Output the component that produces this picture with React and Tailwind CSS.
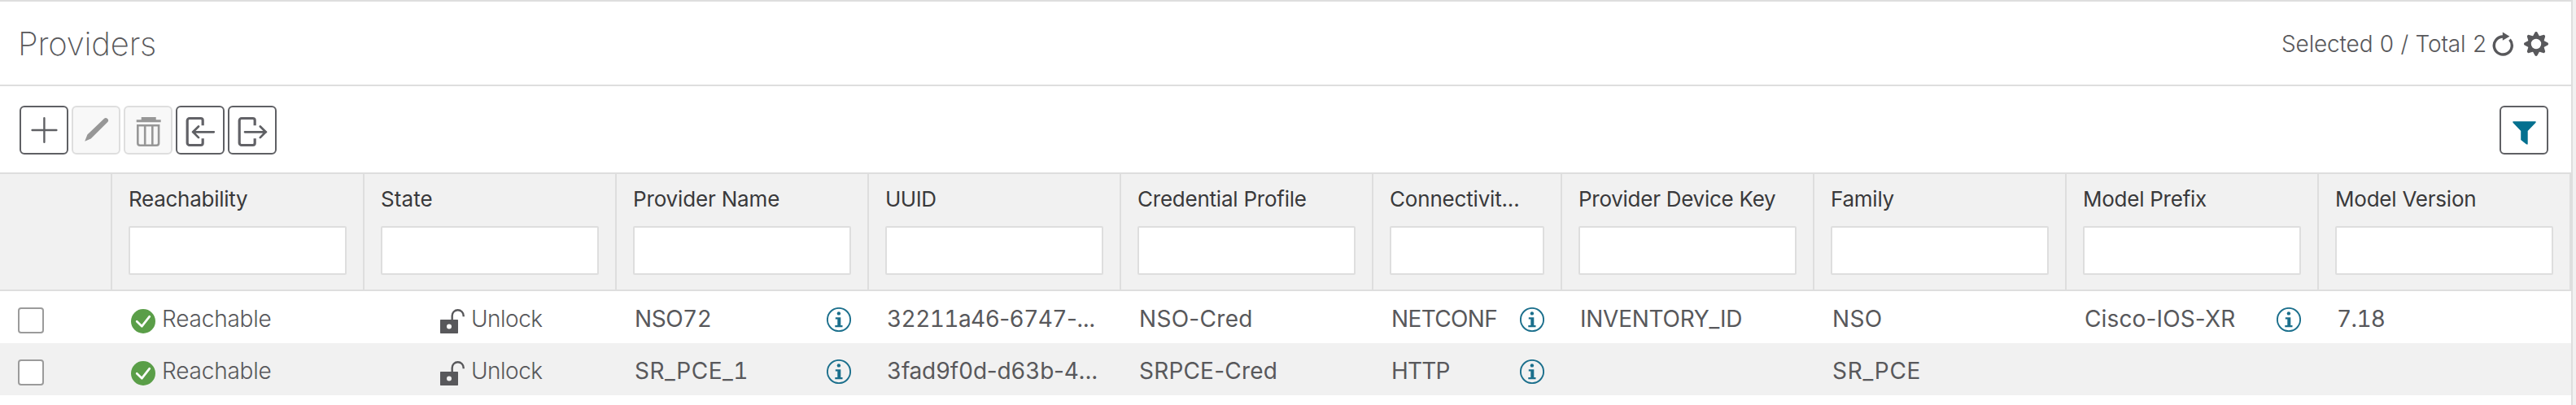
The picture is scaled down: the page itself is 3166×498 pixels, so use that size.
const columns = [
  { title: 'Reachability', w: 'w-[310px]', track: 'tracking-[-0.28px]' },
  { title: 'State', w: 'w-[310px]', track: 'tracking-[0.1px]' },
  { title: 'Provider Name', w: 'w-[310px]', track: 'tracking-[-0.16px]' },
  { title: 'UUID', w: 'w-[310px]', track: 'tracking-[-0.5px]' },
  { title: 'Credential Profile', w: 'w-[310px]', track: 'tracking-[-0.23px]' },
  { title: 'Connectivit...', w: 'w-[232px]', track: 'tracking-[-0.18px]' },
  { title: 'Provider Device Key', w: 'w-[310px]', track: 'tracking-[-0.27px]' },
  { title: 'Family', w: 'w-[310px]', track: 'tracking-[-0.25px]' },
  { title: 'Model Prefix', w: 'w-[310px]', track: 'tracking-[-0.25px]' },
  { title: 'Model Version', w: 'w-[310px]', track: 'tracking-[-0.22px]' },
];

const rows = [
  [
    { text: 'NSO72', info: true, track: 'tracking-[-0.46px]' },
    { text: '32211a46-6747-...', track: 'tracking-[-0.57px]' },
    { text: 'NSO-Cred', track: 'tracking-[0.3px]' },
    { text: 'NETCONF', info: true, track: 'tracking-[-0.64px]' },
    { text: 'INVENTORY_ID', track: 'tracking-[-0.25px]' },
    { text: 'NSO', track: 'tracking-[0.3px]' },
    { text: 'Cisco-IOS-XR', info: true, track: 'tracking-[0.14px]' },
    { text: '7.18', track: 'tracking-[-0.9px]' },
  ],
  [
    { text: 'SR_PCE_1', info: true, track: 'tracking-[0.53px]' },
    { text: '3fad9f0d-d63b-4...', track: 'tracking-[-0.25px]' },
    { text: 'SRPCE-Cred', track: 'tracking-[0.2px]' },
    { text: 'HTTP', info: true, track: 'tracking-[-0.8px]' },
    { text: '' },
    { text: 'SR_PCE', track: 'tracking-[0.71px]' },
    { text: '' },
    { text: '' },
  ],
];

function InfoIcon() {
  return (
    <svg className="h-[30px] w-[30px] shrink-0" viewBox="0 0 30 30">
      <circle cx="15" cy="15" r="14.100" fill="none" stroke="#1b6f8c" strokeWidth="1.900" />
      <circle cx="14.900" cy="7.400" r="2.200" fill="#1b6f8c" />
      <path d="M10.800 12.200h6.500v9.700h2.200v2.400h-9.200v-2.400h3v-7.300h-2.500z" fill="#1b6f8c" />
    </svg>
  );
}

function CheckIcon() {
  return (
    <svg className="h-[30px] w-[30px] shrink-0" viewBox="0 0 30 30">
      <circle cx="15" cy="15" r="15" fill="#5a9e48" />
      <path d="M7.200 15.200l6.200 6L22.800 9.200" fill="none" stroke="#fff" strokeWidth="2.700" strokeLinecap="round" strokeLinejoin="round" />
    </svg>
  );
}

function UnlockIcon() {
  return (
    <svg className="h-[30px] w-[30px] shrink-0" viewBox="0 0 30 30">
      <path d="M14.700 14V8.200a7 7 0 0 1 14 0v1" fill="none" stroke="#58585b" strokeWidth="2.400" />
      <path fillRule="evenodd" d="M.7 13h20.600a.7.7 0 0 1 .7.7v15.600a.7.7 0 0 1-.7.7H.7a.7.7 0 0 1-.7-.7V13.700a.7.7 0 0 1 .7-.7zM11 18.500a3 3 0 1 0 0 6 3 3 0 1 0 0-6z" fill="#58585b" />
    </svg>
  );
}

function ToolButton({ disabled, children }) {
  return (
    <button
      className={
        disabled
          ? 'h-[60px] w-[60px] rounded-[6px] border-2 border-[#dedede] bg-[#f8f8f8]'
          : 'h-[60px] w-[60px] rounded-[6px] border-2 border-[#5f6064] bg-white'
      }
    >
      <svg className="block h-[56px] w-[56px]" viewBox="2 2 56 56" fill="none">
        {children}
      </svg>
    </button>
  );
}

function Door() {
  return (
    <path
      d="M33.200 24.300V18a2.500 2.500 0 0 0-2.500-2.500H17A2.800 2.800 0 0 0 14.200 18.300v27.400A2.800 2.800 0 0 0 17 48.500h13.700a2.500 2.500 0 0 0 2.500-2.500v-5.700"
      stroke="#626267"
      strokeWidth="3.200"
    />
  );
}

function GearIcon() {
  const teeth = Array.from({ length: 8 }, (_, i) => i * 45);
  return (
    <svg className="h-[30px] w-[30px]" viewBox="-15 -15 30 30">
      <circle r="8.200" fill="none" stroke="#58585b" strokeWidth="4" />
      {teeth.map((a) => (
        <path key={a} d="M-4.300 -9L-1.700 -13.800A1.800 1.800 0 0 1 1.700 -13.800L4.300 -9z" transform={`rotate(${a})`} fill="#58585b" />
      ))}
    </svg>
  );
}

function Value({ text, track = '' }) {
  return (
    <span className={`whitespace-nowrap pt-[4px] text-[28px] leading-[60px] ${track}`}>
      {text.split(/(\d+)/).map((part, i) =>
        i % 2 ? <span key={i} className="tabular-nums">{part}</span> : part
      )}
    </span>
  );
}

export default function App() {
  return (
    <div className="flex h-[498px] w-[3166px] bg-[#f1f1f1] font-['Inter',sans-serif] text-[#58585b]">
      <div className="h-full w-[3162px] border-r-2 border-t-2 border-[#dedede] bg-white">
        <header className="flex h-[104px] items-center justify-between border-b-2 border-[#dedede] pl-[22px] pr-[28px]">
          <h1 className="pt-[2px] text-[40px] font-extralight leading-none tracking-[-0.2px]">Providers</h1>
          <div className="flex items-center">
            <span className="whitespace-nowrap pt-[1px] text-[28px] font-light tracking-[-0.16px] [word-spacing:0.8px]">Selected 0 / Total 2</span>
            <svg className="ml-[6px] mt-[2px] h-[30px] w-[30px]" viewBox="0 0 30 30">
              <path d="M14.300 6a11 11 0 1 0 8.200 3.700" fill="none" stroke="#58585b" strokeWidth="3.400" />
              <path d="M13.800 .4l8.600 5.300-8.600 5z" fill="#58585b" />
            </svg>
            <div className="ml-[10px] mt-[2px]"><GearIcon /></div>
          </div>
        </header>

        <div className="flex h-[108px] items-center justify-between border-b-2 border-[#dedede] pl-6 pr-[28px] pt-[2px]">
          <div className="flex gap-1">
            <ToolButton>
              <path d="M30.400 15.200v29.600M15.600 30h29.800" stroke="#5f6064" strokeWidth="2.400" strokeLinecap="round" />
            </ToolButton>
            <ToolButton disabled>
              <path d="M16.200 43.700l3.200-8.300L39.800 16a3 3 0 0 1 4.300 4.300L23.700 40.400z" fill="#979797" />
            </ToolButton>
            <ToolButton disabled>
              <path d="M15.700 17.300h6v-3.300h18v3.300h6v3h-30z" fill="#979797" />
              <path d="M17.300 24.300h25.800V46a2.700 2.700 0 0 1-2.700 2.700H20a2.700 2.700 0 0 1-2.700-2.700zM26.200 24v24.500M35.300 24v24.500" stroke="#979797" strokeWidth="2.600" />
            </ToolButton>
            <ToolButton>
              <Door />
              <path d="M46.800 32.300H21M28 25.500l-6.800 6.800 6.800 6.800" stroke="#5f6064" strokeWidth="2.700" strokeLinecap="round" strokeLinejoin="round" />
            </ToolButton>
            <ToolButton>
              <Door />
              <path d="M21 32.300h26M39.800 25.500l6.800 6.800-6.800 6.800" stroke="#5f6064" strokeWidth="2.700" strokeLinecap="round" strokeLinejoin="round" />
            </ToolButton>
          </div>
          <ToolButton>
            <path d="M16.400 19.200h28.200v1.600L34.700 31v16.600h-1.600L26.200 42V31L16.400 20.800z" fill="#04708f" />
          </ToolButton>
        </div>

        <div className="flex h-[144px] w-[3160px] border-b-2 border-[#dedede] bg-[#f1f1f1]">
          <div className="w-[138px] border-r-2 border-[#dedede]" />
          {columns.map((c) => (
            <div key={c.title} className={`${c.w} border-r-2 border-[#dedede] px-5 pt-[15px]`}>
              <div className={`whitespace-nowrap text-[26px] leading-[32px] text-[#39393b] ${c.track}`}>{c.title}</div>
              <input className="mt-[17px] block h-[60px] w-full rounded-[2px] border-2 border-[#dedede] bg-white" />
            </div>
          ))}
        </div>

        {rows.map((cells, r) => (
          <div key={r} className={r % 2 ? 'flex h-16 bg-[#f1f1f1]' : 'flex h-16 bg-white'}>
            <div className="w-[138px] pl-[22px] pt-[20px]">
              <div className="h-8 w-8 rounded-[4px] border-2 border-[#9b9b9b] bg-white" />
            </div>
            <div className="flex w-[310px] items-center pl-[23px]">
              <div className="pt-[10px]"><CheckIcon /></div>
              <span className="pl-[8px] pt-[4px] text-[28px] font-light leading-[60px] tracking-[-0.2px]">Reachable</span>
            </div>
            <div className="flex w-[310px] items-center pl-[93px]">
              <div className="pt-[10px]"><UnlockIcon /></div>
              <span className="pl-[8px] pt-[4px] text-[28px] font-light leading-[60px] tracking-[-0.5px]">Unlock</span>
            </div>
            {cells.map((cell, i) => (
              <div key={i} className={`${columns[i + 2].w} flex items-center justify-between px-[22px]`}>
                <Value text={cell.text} track={cell.track} />
                {cell.info && <div className="pt-[6px]"><InfoIcon /></div>}
              </div>
            ))}
          </div>
        ))}
      </div>
    </div>
  );
}
